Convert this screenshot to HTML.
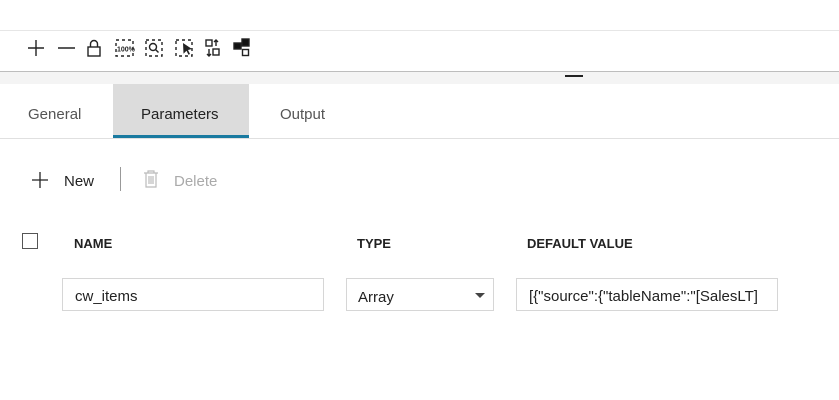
<!DOCTYPE html>
<html><head><meta charset="utf-8"><style>
body{margin:0;width:839px;height:400px;background:#fff;font-family:"Segoe UI","Liberation Sans",sans-serif;position:relative;overflow:hidden;color:#222}
.a{position:absolute}
.t{font-size:15px}
</style></head><body>
<div class="a" style="left:0;top:30px;width:839px;height:1px;background:#e6e6e6"></div>
<svg class="a" style="left:26px;top:36px" width="232" height="24" viewBox="0 0 232 24" fill="none" stroke="#222" stroke-width="1.4">
<path d="M10 4v16M2 12h16"/>
<path d="M32 12h17"/>
<rect x="62" y="11" width="12" height="9"/><path d="M64.5 11V8a3.5 3.5 0 0 1 7 0v3"/>
<g stroke-dasharray="3 3"><rect x="90" y="4" width="17" height="16"/><rect x="120" y="4" width="16" height="16"/><rect x="150" y="4" width="16" height="16"/></g>
<text x="91" y="15.5" font-size="7" fill="#222" stroke="none" font-family="Liberation Sans" font-weight="bold">100%</text>
<circle cx="127" cy="11" r="3.5"/><path d="M129.5 13.5l3 3"/>
<path d="M157 7l9 6-4 1 2 4-1.5.8-2-4-3 3z" fill="#222" stroke="none"/>
<rect x="180" y="4" width="6" height="6"/><rect x="187" y="13" width="6" height="6"/><path d="M183 13v7M181 18l2 2 2-2M190 10V4M188 6l2-2 2 2"/>
<rect x="208" y="7" width="7" height="6" fill="#111"/><rect x="216" y="3" width="7" height="7" fill="#111"/><rect x="216.5" y="13.5" width="6" height="6"/>
</svg>
<div class="a" style="left:0;top:71px;width:839px;height:1px;background:#bdbdbd"></div>
<div class="a" style="left:0;top:72px;width:839px;height:12px;background:#f4f4f4"></div>
<div class="a" style="left:565px;top:75px;width:18px;height:2px;background:#222"></div>
<div class="a" style="left:113px;top:84px;width:136px;height:52px;background:#dcdcdc"></div>
<div class="a" style="left:113px;top:135px;width:136px;height:3px;background:#1a7aa0"></div>
<div class="a" style="left:0;top:138px;width:839px;height:1px;background:#e0e0e0"></div>
<div class="a t" style="left:28px;top:106px;color:#555">General</div>
<div class="a t" style="left:141px;top:106px;color:#222">Parameters</div>
<div class="a t" style="left:280px;top:106px;color:#555">Output</div>
<svg class="a" style="left:30px;top:170px" width="20" height="20" fill="none" stroke="#222" stroke-width="1.3"><path d="M10 2v16M2 10h16"/></svg>
<div class="a t" style="left:64px;top:173px">New</div>
<div class="a" style="left:120px;top:167px;width:1px;height:24px;background:#999"></div>
<svg class="a" style="left:142px;top:169px" width="18" height="20" fill="none" stroke="#bbb" stroke-width="1.2"><path d="M2 4h14M6 4V2h6v2M4 4v14h10V4M7 7v8M9 7v8M11 7v8"/></svg>
<div class="a t" style="left:174px;top:173px;color:#aaa">Delete</div>
<div class="a" style="left:22px;top:233px;width:16px;height:16px;border:1px solid #555;box-sizing:border-box"></div>
<div class="a" style="left:74px;top:236px;font-size:13px;font-weight:bold;color:#222">NAME</div>
<div class="a" style="left:357px;top:236px;font-size:13px;font-weight:bold;color:#222">TYPE</div>
<div class="a" style="left:527px;top:236px;font-size:13px;font-weight:bold;color:#222">DEFAULT VALUE</div>
<div class="a" style="left:62px;top:278px;width:262px;height:33px;border:1px solid #d6d6d6;box-sizing:border-box"></div>
<div class="a t" style="left:75px;top:288px">cw_items</div>
<div class="a" style="left:346px;top:278px;width:148px;height:33px;border:1px solid #d6d6d6;box-sizing:border-box"></div>
<div class="a t" style="left:358px;top:289px">Array</div>
<svg class="a" style="left:475px;top:293px" width="10" height="6"><path d="M0 0h10L5 5z" fill="#444"/></svg>
<div class="a" style="left:516px;top:278px;width:262px;height:33px;border:1px solid #d6d6d6;box-sizing:border-box;overflow:hidden"></div>
<div class="a t" style="left:529px;top:288px;width:247px;overflow:hidden;white-space:nowrap">[{"source":{"tableName":"[SalesLT]</div>
</body></html>
